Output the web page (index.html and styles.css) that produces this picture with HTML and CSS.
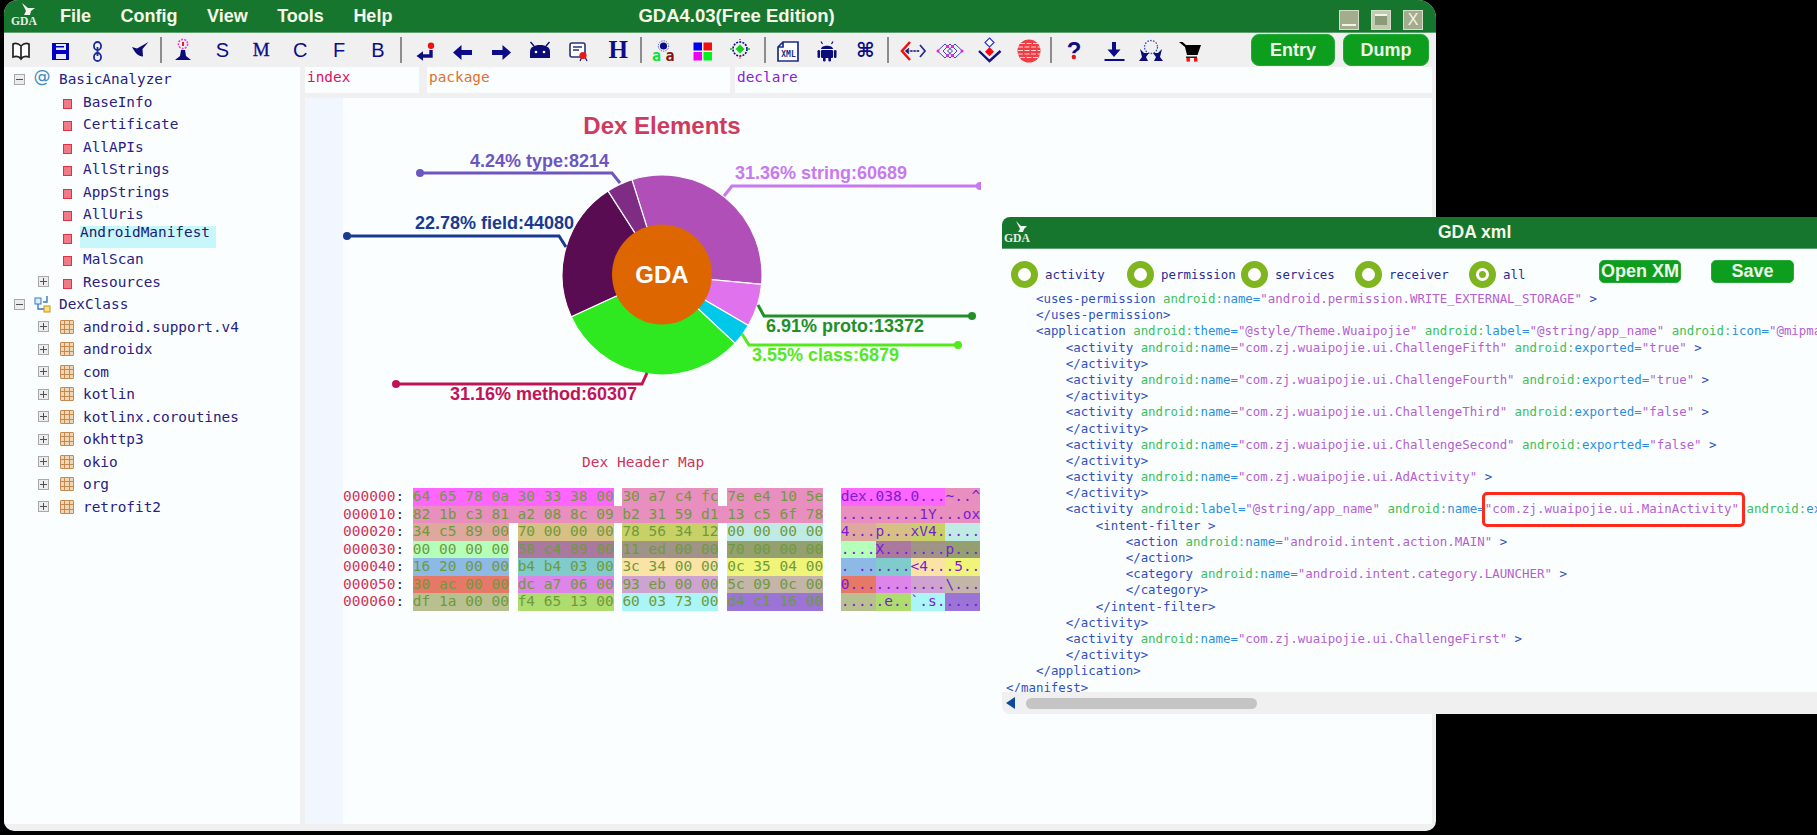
FILE: index.html
```html
<!DOCTYPE html>
<html lang="en">
<head>
  <meta charset="UTF-8" />
  <title>GDA4.03(Free Edition)</title>
  <link rel="stylesheet" href="styles.css">
</head>
<body>
  <div class="app">
    <div class="titlebar">
      <svg class="logo" width="32" height="32" viewBox="0 0 32 32">
        <path d="M16 3 L22 8 L29 8 L25 11 L24 15 L18 15 L20 11 Z" fill="#f2f6ee"/>
        <text x="18" y="25" text-anchor="middle" class="logo-text">GDA</text>
      </svg>
      <div class="menu">
        <span>File</span>
        <span>Config</span>
        <span>View</span>
        <span>Tools</span>
        <span>Help</span>
      </div>
      <div class="app-title">GDA4.03(Free Edition)</div>
      <div class="winbtns">
        <span class="winbtn win-min"></span>
        <span class="winbtn win-max"></span>
        <span class="winbtn win-close">X</span>
      </div>
    </div>

    <div class="toolbar">
      <svg class="tool" viewBox="0 0 34 34"><path d="M17 13 C14 10 11 10 9 11 V24 C12 23 15 23 17 26 C19 23 22 23 25 24 V11 C23 10 20 10 17 13 Z M17 13 V26" fill="#fff" stroke="#222" stroke-width="1.7"/></svg>
      <svg class="tool" viewBox="0 0 34 34"><path d="M9 10 H26 V27 H9 Z" fill="#0000c0"/><rect x="13" y="11" width="10" height="6" fill="#e8e8ff"/><rect x="13" y="21" width="10" height="5" fill="#e8e8ff"/><rect x="13" y="13" width="8" height="1.5" fill="#0000c0"/></svg>
      <svg class="tool" viewBox="0 0 34 34"><g fill="none" stroke="#1c2c9c" stroke-width="1.8"><rect x="12" y="9" width="7" height="8" rx="3.5"/><rect x="12" y="20" width="7" height="8" rx="3.5"/><path d="M15.5 14 V23"/></g></svg>
      <svg class="tool" viewBox="0 0 34 34"><path d="M11 14 L16 15.5 L27.5 9 L21.5 16 L22 23.5 C17 23.5 13.5 19 11 14 Z" fill="#0c0c78"/></svg>
      <span class="sep"></span>
      <svg class="tool" viewBox="0 0 34 34"><circle cx="17" cy="11" r="4.6" fill="none" stroke="#f03ce0" stroke-width="1.6" stroke-dasharray="2 1.2"/><rect x="16" y="9" width="2" height="4" fill="#e02020"/><path d="M15 17 H19 L20 23 L25 27 H9 L14 23 Z" fill="#0c0c78"/></svg>
      <span class="tool tool-letter">S</span>
      <span class="tool tool-letter tool-serif">M</span>
      <span class="tool tool-letter">C</span>
      <span class="tool tool-letter">F</span>
      <span class="tool tool-letter">B</span>
      <span class="sep"></span>
      <svg class="tool" viewBox="0 0 34 34"><circle cx="24" cy="12.7" r="3.2" fill="#f01010"/><path d="M24 17 V23 H14" fill="none" stroke="#0c0c88" stroke-width="3.4"/><path d="M9.5 23 L16 18.2 V27.8 Z" fill="#0c0c88"/></svg>
      <svg class="tool" viewBox="0 0 34 34"><path d="M7 19.5 L15.5 12 V17 H26 V22 H15.5 V27 Z" fill="#0c0c88"/></svg>
      <svg class="tool" viewBox="0 0 34 34"><path d="M27 19.5 L18.5 12 V17 H8 V22 H18.5 V27 Z" fill="#0c0c88"/></svg>
      <svg class="tool" viewBox="0 0 34 34"><path d="M7 25 V19 C7 14 11 12 17 12 C23 12 27 14 27 19 V25 Z" fill="#0c0c78"/><path d="M11 13 L7.5 9 M23 13 L26.5 9" stroke="#0c0c78" stroke-width="1.4"/><circle cx="13" cy="19" r="1.3" fill="#fff"/><circle cx="21" cy="19" r="1.3" fill="#fff"/></svg>
      <svg class="tool" viewBox="0 0 34 34"><rect x="8" y="10" width="15" height="14" rx="2" fill="#fff" stroke="#28307c" stroke-width="1.6"/><path d="M11 14 H20 M11 17 H17" stroke="#28307c" stroke-width="1.4"/><path d="M18 28 L20 24 L23 24 L25 28" fill="none" stroke="#0c0c88" stroke-width="1.2"/><circle cx="21" cy="22.5" r="3.6" fill="#e81818"/></svg>
      <span class="tool tool-letter tool-h">H</span>
      <span class="sep"></span>
      <svg class="tool" viewBox="0 0 34 34"><circle cx="16.5" cy="13" r="3.6" fill="#0c0c88"/><circle cx="16.5" cy="13" r="5.2" fill="none" stroke="#3c50d8" stroke-width="1" stroke-dasharray="1.2 1.2"/><text x="9.5" y="27.5" text-anchor="middle" class="tool-a tool-a-green">a</text><text x="23" y="27.5" text-anchor="middle" class="tool-a tool-a-red">a</text></svg>
      <svg class="tool" viewBox="0 0 34 34"><rect x="7.5" y="9.5" width="8.5" height="8" fill="#0000f0"/><rect x="17.5" y="9.5" width="8.5" height="8" fill="#f01010"/><rect x="7.5" y="19" width="8.5" height="8.5" fill="#f000f0"/><rect x="17.5" y="19" width="8.5" height="8.5" fill="#00f020"/></svg>
      <svg class="tool" viewBox="0 0 34 34"><circle cx="15" cy="16" r="7" fill="none" stroke="#0c0c88" stroke-width="1.6" stroke-dasharray="2 1.2"/><path d="M15 11.5 L19.5 16 L15 20.5 L10.5 16 Z" fill="#10d020"/><path d="M15 6 V8.5 M15 23.5 V26" stroke="#f01010" stroke-width="1.4" stroke-dasharray="1 1"/><path d="M5 16 H7.5 M22.5 16 H25" stroke="#10c020" stroke-width="1.4"/></svg>
      <span class="sep"></span>
      <svg class="tool" viewBox="0 0 34 34"><path d="M13 9 H28 V28 H8 V14 Z M13 9 V14 H8" fill="#fff" stroke="#1c2c8c" stroke-width="1.7"/><text x="18.5" y="23.5" text-anchor="middle" class="tool-xml">XML</text></svg>
      <svg class="tool" viewBox="0 0 34 34"><path d="M12 16 C12 11.5 24 11.5 24 16 Z" fill="#0c0c78"/><path d="M13.5 11 L12 8.5 M22.5 11 L24 8.5" stroke="#0c0c78" stroke-width="1.2"/><rect x="12" y="17" width="12" height="8" rx="1" fill="#0c0c78"/><rect x="8.5" y="17" width="2.6" height="8" rx="1.3" fill="#0c0c78"/><rect x="24.9" y="17" width="2.6" height="8" rx="1.3" fill="#0c0c78"/><rect x="14" y="24" width="2.6" height="4.5" rx="1.2" fill="#0c0c78"/><rect x="19.4" y="24" width="2.6" height="4.5" rx="1.2" fill="#0c0c78"/></svg>
      <span class="tool tool-cmd">⌘</span>
      <span class="sep"></span>
      <svg class="tool" viewBox="0 0 34 34"><path d="M16 9 L8 18 L16 27" fill="none" stroke="#f01010" stroke-width="2.6"/><path d="M13 18 H26" stroke="#0c0c78" stroke-width="1.6" stroke-dasharray="2.4 .8"/><path d="M15 15.5 L12 18 L15 20.5" fill="none" stroke="#0c0c78" stroke-width="1.4"/><path d="M26 12 L31 18 L26 24" fill="none" stroke="#28308c" stroke-width="1.8"/></svg>
      <svg class="tool" viewBox="0 0 34 34"><g fill="none" stroke="#3c48c8" stroke-width="1"><path d="M4.5 18 L12 11 L19.5 18 L12 25 Z"/><path d="M10 18 L17 11 L24 18 L17 25 Z"/><path d="M14.5 18 L22 11 L29.5 18 L22 25 Z"/></g><g fill="#f01ce0"><circle cx="5" cy="18" r="1.5"/><circle cx="14.5" cy="13.5" r="1.5"/><circle cx="19.5" cy="13.5" r="1.5"/><circle cx="14.5" cy="22.5" r="1.5"/><circle cx="19.5" cy="22.5" r="1.5"/><circle cx="29" cy="18" r="1.5"/></g></svg>
      <svg class="tool" viewBox="0 0 34 34"><path d="M17.5 5 L22 9.5 L17.5 14 L13 9.5 Z" fill="#fff" stroke="#2838d8" stroke-width="1.2"/><path d="M17.5 14 L22 18.7 L17.5 23.2 L13 18.7 Z" fill="#f00c10"/><path d="M7 18 L17.5 28 L28.5 18" fill="none" stroke="#101088" stroke-width="2.4"/></svg>
      <svg class="tool" viewBox="0 0 34 34"><circle cx="18" cy="18" r="11.5" fill="#f03c44"/><g stroke="#ffd8d8" stroke-width="1.1" stroke-dasharray="5 1.5" fill="none"><path d="M9 10.5 H27"/><path d="M7 14 H29"/><path d="M7 17.5 H29"/><path d="M7 21 H29"/><path d="M9 24.5 H27"/></g></svg>
      <span class="sep"></span>
      <svg class="tool" viewBox="0 0 34 34"><text x="17" y="25.5" text-anchor="middle" class="tool-q">?</text><rect x="12.8" y="20.2" width="8" height="6" fill="#f0f0f0"/><circle cx="16.8" cy="24" r="2.2" fill="#f01010"/></svg>
      <svg class="tool" viewBox="0 0 34 34"><path d="M19 24 L12.5 16.5 H17 V9 H21 V16.5 H25.5 Z" fill="#0c0c88"/><rect x="9.5" y="26" width="20" height="2" fill="#0c0c88"/></svg>
      <svg class="tool" viewBox="0 0 34 34"><circle cx="17" cy="14" r="6.5" fill="none" stroke="#4050b8" stroke-width="1.3" stroke-dasharray="1.6 1.3"/><path d="M6 16 L10 20 L15 20 L12 24 L14 28 L5 28 L8 24 Z M28 16 L24 20 L19 20 L22 24 L20 28 L29 28 L26 24 Z" fill="#0c0c78"/></svg>
      <svg class="tool" viewBox="0 0 34 34"><path d="M6 9 H9.5 L13 12 H28 L24.5 22 H14 L12 14 Z" fill="#000"/><rect x="13" y="23.5" width="11" height="1.5" fill="#222"/><rect x="13.5" y="25" width="3.4" height="3.6" fill="#f01010"/><rect x="21" y="25" width="3.4" height="3.6" fill="#f01010"/></svg>
      <div class="toolbtns">
        <button class="gbtn btn-entry">Entry</button>
        <button class="gbtn btn-dump">Dump</button>
      </div>
    </div>

    <div class="main">
      <div class="tree">
        <div class="row"><span class="exp minus"></span><span class="ico-root at">@</span><span>BasicAnalyzer</span></div>
        <div class="row sub"><span class="exp none"></span><span class="ico"><i class="leaf"></i></span><span>BaseInfo</span></div>
        <div class="row sub"><span class="exp none"></span><span class="ico"><i class="leaf"></i></span><span>Certificate</span></div>
        <div class="row sub"><span class="exp none"></span><span class="ico"><i class="leaf"></i></span><span>AllAPIs</span></div>
        <div class="row sub"><span class="exp none"></span><span class="ico"><i class="leaf"></i></span><span>AllStrings</span></div>
        <div class="row sub"><span class="exp none"></span><span class="ico"><i class="leaf"></i></span><span>AppStrings</span></div>
        <div class="row sub"><span class="exp none"></span><span class="ico"><i class="leaf"></i></span><span>AllUris</span></div>
        <div class="row sub"><span class="exp none"></span><span class="ico"><i class="leaf"></i></span><span class="selected">AndroidManifest</span></div>
        <div class="row sub"><span class="exp none"></span><span class="ico"><i class="leaf"></i></span><span>MalScan</span></div>
        <div class="row sub"><span class="exp plus"></span><span class="ico"><i class="leaf"></i></span><span>Resources</span></div>
        <div class="row"><span class="exp minus"></span>
          <svg class="ico-root" width="18" height="18" viewBox="0 0 18 18"><rect x="2" y="3" width="6" height="6" fill="#d8ecff" stroke="#3a78c0"/><path d="M5 9 V14 H11 M14 1 V7 H10" fill="none" stroke="#3a78c0" stroke-width="1.4"/><rect x="11" y="11" width="6" height="6" fill="#ffe080" stroke="#c89020"/></svg>
          <span>DexClass</span></div>
        <div class="row sub"><span class="exp plus"></span><span class="ico"><i class="pkg"></i></span><span>android.support.v4</span></div>
        <div class="row sub"><span class="exp plus"></span><span class="ico"><i class="pkg"></i></span><span>androidx</span></div>
        <div class="row sub"><span class="exp plus"></span><span class="ico"><i class="pkg"></i></span><span>com</span></div>
        <div class="row sub"><span class="exp plus"></span><span class="ico"><i class="pkg"></i></span><span>kotlin</span></div>
        <div class="row sub"><span class="exp plus"></span><span class="ico"><i class="pkg"></i></span><span>kotlinx.coroutines</span></div>
        <div class="row sub"><span class="exp plus"></span><span class="ico"><i class="pkg"></i></span><span>okhttp3</span></div>
        <div class="row sub"><span class="exp plus"></span><span class="ico"><i class="pkg"></i></span><span>okio</span></div>
        <div class="row sub"><span class="exp plus"></span><span class="ico"><i class="pkg"></i></span><span>org</span></div>
        <div class="row sub"><span class="exp plus"></span><span class="ico"><i class="pkg"></i></span><span>retrofit2</span></div>
      </div>

      <div class="right">
        <div class="heads">
          <div class="head head-index">index</div>
          <div class="head head-package">package</div>
          <div class="head head-declare">declare</div>
        </div>
        <div class="body">
          <div class="gutter"></div>
          <div class="content">
            <svg class="chart" width="638" height="320" viewBox="343 98 638 320">
              <text x="662" y="134" text-anchor="middle" class="chart-title">Dex Elements</text>
              <g stroke="#fafeff" stroke-width="1.2">
                <path d="M662 275 L631.9 179.6 A100 100 0 0 1 761.6 284.4 Z" fill="#b04fb8"/>
                <path d="M662 275 L761.6 284.4 A100 100 0 0 1 748.3 325.5 Z" fill="#e072ee"/>
                <path d="M662 275 L748.3 325.5 A100 100 0 0 1 735 343.4 Z" fill="#00c8e8"/>
                <path d="M662 275 L735 343.4 A100 100 0 0 1 571.2 316.8 Z" fill="#2ee820"/>
                <path d="M662 275 L571.2 316.8 A100 100 0 0 1 608 190.9 Z" fill="#5a0c52"/>
                <path d="M662 275 L608 190.9 A100 100 0 0 1 631.9 179.6 Z" fill="#7e2c84"/>
              </g>
              <circle cx="662" cy="274.5" r="50" fill="#dd6600"/>
              <text x="662" y="283" text-anchor="middle" class="chart-center">GDA</text>

              <g fill="none" stroke-width="3">
                <polyline points="420,173 612,173 620,183" stroke="#6e55c0"/>
                <polyline points="980,186 732,186 724,196" stroke="#c878f0"/>
                <polyline points="347,236 559,236 566,247" stroke="#1a3a90"/>
                <polyline points="972,316 764,316 758,305" stroke="#248f28"/>
                <polyline points="958,345 749,345 742,334" stroke="#55e81e"/>
                <polyline points="396,384 642,384 647,373" stroke="#c01458"/>
              </g>
              <circle cx="420" cy="173" r="4" fill="#6e55c0"/>
              <circle cx="980" cy="186" r="4" fill="#c878f0"/>
              <circle cx="347" cy="236" r="4" fill="#1a3a90"/>
              <circle cx="972" cy="316" r="4" fill="#248f28"/>
              <circle cx="958" cy="345" r="4" fill="#55e81e"/>
              <circle cx="396" cy="384" r="4" fill="#c01458"/>

              <text x="470" y="167" class="chart-label" fill="#6e55c0">4.24% type:8214</text>
              <text x="735" y="179" class="chart-label" fill="#c878f0">31.36% string:60689</text>
              <text x="415" y="229" class="chart-label" fill="#1a3a90">22.78% field:44080</text>
              <text x="766" y="332" class="chart-label" fill="#248f28">6.91% proto:13372</text>
              <text x="752" y="361" class="chart-label" fill="#55e81e">3.55% class:6879</text>
              <text x="450" y="400" class="chart-label" fill="#c01458">31.16% method:60307</text>
            </svg>

            <div class="map-title">Dex Header Map</div>
            <div class="hex">
              <div class="hexrow"><span class="off">000000</span>: <span class="hx c0a">64 65 78 0a 30 33 38 00</span> <span class="hx c0b">30 a7 c4 fc</span> <span class="hx c0b">7e e4 10 5e</span>  <span class="asc c0a">dex.038.0...</span><span class="asc c0b">~..^</span></div>
              <div class="hexrow"><span class="off">000010</span>: <span class="hx c0b">82 1b c3 81 a2 08 8c 09 b2 31 59 d1 13 c5 6f 78</span>  <span class="asc c0b">.........1Y...ox</span></div>
              <div class="hexrow"><span class="off">000020</span>: <span class="hx c2a">34 c5 89 00</span> <span class="hx c2b">70 00 00 00</span> <span class="hx c2c">78 56 34 12</span> <span class="hx c2d">00 00 00 00</span>  <span class="asc c2a">4...</span><span class="asc c2b">p...</span><span class="asc c2c">xV4.</span><span class="asc c2d">....</span></div>
              <div class="hexrow"><span class="off">000030</span>: <span class="hx c3a">00 00 00 00</span> <span class="hx c3b">58 c4 89 00</span> <span class="hx c3c">11 ed 00 00</span> <span class="hx c3d">70 00 00 00</span>  <span class="asc c3a">....</span><span class="asc c3b">X...</span><span class="asc c3c">....</span><span class="asc c3d">p...</span></div>
              <div class="hexrow"><span class="off">000040</span>: <span class="hx c4a">16 20 00 00</span> <span class="hx c4b">b4 b4 03 00</span> <span class="hx c4c">3c 34 00 00</span> <span class="hx c4d">0c 35 04 00</span>  <span class="asc c4a">. ..</span><span class="asc c4b">....</span><span class="asc c4c">&lt;4..</span><span class="asc c4d">.5..</span></div>
              <div class="hexrow"><span class="off">000050</span>: <span class="hx c5a">30 ac 00 00</span> <span class="hx c5b">dc a7 06 00</span> <span class="hx c5c">93 eb 00 00</span> <span class="hx c5d">5c 09 0c 00</span>  <span class="asc c5a">0...</span><span class="asc c5b">....</span><span class="asc c5c">....</span><span class="asc c5d">\...</span></div>
              <div class="hexrow"><span class="off">000060</span>: <span class="hx c6a">df 1a 00 00</span> <span class="hx c6b">f4 65 13 00</span> <span class="hx c6c">60 03 73 00</span> <span class="hx c6d">d4 c1 16 00</span>  <span class="asc c6a">....</span><span class="asc c6b">.e..</span><span class="asc c6c">`.s.</span><span class="asc c6d">....</span></div>
            </div>
          </div>
        </div>
      </div>
    </div>
  </div>

  <div class="xmlwin">
    <div class="xml-title">
      <svg class="xml-logo" width="32" height="30" viewBox="0 0 32 30">
        <path d="M14 3 L19 8 L25 8 L22 11 L21 14 L16 14 L18 11 Z" fill="#f2f6ee"/>
        <text x="15" y="24" text-anchor="middle" class="logo-text">GDA</text>
      </svg>
      <span class="xml-name">GDA xml</span>
    </div>
    <div class="xml-tools">
      <div class="radios">
        <label class="radio"><i class="ring"></i>activity</label>
        <label class="radio"><i class="ring"></i>permission</label>
        <label class="radio"><i class="ring"></i>services</label>
        <label class="radio"><i class="ring"></i>receiver</label>
        <label class="radio"><i class="ring on"></i>all</label>
      </div>
      <button class="gbtn xbtn btn-open">Open XM</button>
      <button class="gbtn xbtn btn-save">Save</button>
    </div>
    <div class="xml-code">
      <div>    <b class="t">&lt;uses-permission</b> <b class="a">android:</b><b class="n">name=</b><b class="v">"android.permission.WRITE_EXTERNAL_STORAGE"</b> <b class="t">&gt;</b></div>
      <div>    <b class="t">&lt;/uses-permission&gt;</b></div>
      <div>    <b class="t">&lt;application</b> <b class="a">android:</b><b class="n">theme=</b><b class="v">"@style/Theme.Wuaipojie"</b> <b class="a">android:</b><b class="n">label=</b><b class="v">"@string/app_name"</b> <b class="a">android:</b><b class="n">icon=</b><b class="v">"@mipmap/ic_launcher"</b></div>
      <div>        <b class="t">&lt;activity</b> <b class="a">android:</b><b class="n">name=</b><b class="v">"com.zj.wuaipojie.ui.ChallengeFifth"</b> <b class="a">android:</b><b class="n">exported=</b><b class="v">"true"</b> <b class="t">&gt;</b></div>
      <div>        <b class="t">&lt;/activity&gt;</b></div>
      <div>        <b class="t">&lt;activity</b> <b class="a">android:</b><b class="n">name=</b><b class="v">"com.zj.wuaipojie.ui.ChallengeFourth"</b> <b class="a">android:</b><b class="n">exported=</b><b class="v">"true"</b> <b class="t">&gt;</b></div>
      <div>        <b class="t">&lt;/activity&gt;</b></div>
      <div>        <b class="t">&lt;activity</b> <b class="a">android:</b><b class="n">name=</b><b class="v">"com.zj.wuaipojie.ui.ChallengeThird"</b> <b class="a">android:</b><b class="n">exported=</b><b class="v">"false"</b> <b class="t">&gt;</b></div>
      <div>        <b class="t">&lt;/activity&gt;</b></div>
      <div>        <b class="t">&lt;activity</b> <b class="a">android:</b><b class="n">name=</b><b class="v">"com.zj.wuaipojie.ui.ChallengeSecond"</b> <b class="a">android:</b><b class="n">exported=</b><b class="v">"false"</b> <b class="t">&gt;</b></div>
      <div>        <b class="t">&lt;/activity&gt;</b></div>
      <div>        <b class="t">&lt;activity</b> <b class="a">android:</b><b class="n">name=</b><b class="v">"com.zj.wuaipojie.ui.AdActivity"</b> <b class="t">&gt;</b></div>
      <div>        <b class="t">&lt;/activity&gt;</b></div>
      <div>        <b class="t">&lt;activity</b> <b class="a">android:</b><b class="n">label=</b><b class="v">"@string/app_name"</b> <b class="a">android:</b><b class="n">name=</b><b class="v">"com.zj.wuaipojie.ui.MainActivity"</b> <b class="a">android:</b><b class="n">exported=</b><b class="v">"true"</b></div>
      <div>            <b class="t">&lt;intent-filter</b> <b class="t">&gt;</b></div>
      <div>                <b class="t">&lt;action</b> <b class="a">android:</b><b class="n">name=</b><b class="v">"android.intent.action.MAIN"</b> <b class="t">&gt;</b></div>
      <div>                <b class="t">&lt;/action&gt;</b></div>
      <div>                <b class="t">&lt;category</b> <b class="a">android:</b><b class="n">name=</b><b class="v">"android.intent.category.LAUNCHER"</b> <b class="t">&gt;</b></div>
      <div>                <b class="t">&lt;/category&gt;</b></div>
      <div>            <b class="t">&lt;/intent-filter&gt;</b></div>
      <div>        <b class="t">&lt;/activity&gt;</b></div>
      <div>        <b class="t">&lt;activity</b> <b class="a">android:</b><b class="n">name=</b><b class="v">"com.zj.wuaipojie.ui.ChallengeFirst"</b> <b class="t">&gt;</b></div>
      <div>        <b class="t">&lt;/activity&gt;</b></div>
      <div>    <b class="t">&lt;/application&gt;</b></div>
      <div><b class="t">&lt;/manifest&gt;</b></div>
    </div>
    <div class="xml-scroll">
      <i class="scroll-arrow"></i>
      <i class="scroll-thumb"></i>
    </div>
    <div class="redbox"></div>
  </div>
</body>
</html>
```

FILE: styles.css
```css
* {
  box-sizing: border-box;
}
html, body {
  height: 100%;
}
body {
  margin: 0;
  padding-left: 4px;
  background-color: #000;
  overflow: hidden;
  font-family: "Liberation Sans", Arial, sans-serif;
}
.app {
  width: 1432px;
  height: 831px;
  background-color: #f0f0f0;
  border-radius: 14px 18px 10px 10px;
  overflow: hidden;
  display: flex;
  flex-direction: column;
}

/* title bar */
.titlebar {
  height: 33px;
  background-color: #17762e;
  border-bottom: 1px solid #5fa070;
  display: flex;
  align-items: center;
  color: #f6f8e8;
  flex-shrink: 0;
}
.logo {
  margin-left: 2px;
  flex-shrink: 0;
}
.logo-text {
  font-family: "Liberation Serif", serif;
  font-weight: bold;
  font-size: 11.7px;
  fill: #e4efe4;
}
.menu {
  display: flex;
  gap: 29.5px;
  margin-left: 22px;
  font-size: 18px;
  font-weight: bold;
  white-space: nowrap;
}
.app-title {
  margin-left: 246px;
  font-size: 18.5px;
  font-weight: bold;
  white-space: nowrap;
}
.winbtns {
  margin-left: auto;
  margin-right: 13px;
  margin-top: 8px;
  display: flex;
  gap: 12px;
}
.winbtn {
  width: 20px;
  height: 20px;
  background-color: #a3ad8d;
  border: 1px solid #d5dcc8;
  display: flex;
  align-items: center;
  justify-content: center;
  color: #f2f4ea;
  font-size: 16px;
}
.win-min {
  background: linear-gradient(#f2f4ea, #f2f4ea) center bottom 3px / 14px 2px no-repeat, #a3ad8d;
}
.win-max {
  background: linear-gradient(#f2f4ea, #f2f4ea) center top 3px / 12px 2px no-repeat, linear-gradient(#8d9a7a, #8d9a7a) center / 12px 10px no-repeat, #c3cab2;
}

/* toolbar */
.toolbar {
  height: 34px;
  display: flex;
  align-items: center;
  gap: 4.9px;
  flex-shrink: 0;
}
.tool {
  width: 34px;
  height: 34px;
  flex-shrink: 0;
  overflow: visible;
}
.tool-letter {
  display: flex;
  align-items: center;
  justify-content: center;
  color: #0c0c8c;
  font-size: 20px;
}
.tool-serif {
  font-family: "Liberation Serif", serif;
  font-size: 19px;
  -webkit-text-stroke: 0.3px #0c0c8c;
}
.tool-h {
  font-family: "Liberation Serif", serif;
  font-weight: bold;
  font-size: 25px;
}
.tool-cmd {
  display: flex;
  align-items: center;
  justify-content: center;
  color: #0c0c88;
  font-family: "DejaVu Sans", sans-serif;
  font-weight: bold;
  font-size: 20px;
}
.tool-a {
  font-family: "DejaVu Sans Mono", monospace;
  font-weight: bold;
  font-size: 15px;
}
.tool-a-green {
  fill: #10e030;
}
.tool-a-red {
  fill: #8c1010;
}
.tool-xml {
  font-family: "DejaVu Sans Mono", monospace;
  font-size: 8px;
  font-weight: bold;
  fill: #1c2c8c;
}
.tool-q {
  font-family: "Liberation Sans", sans-serif;
  font-weight: bold;
  font-size: 24px;
  fill: #0c0c88;
}
.sep {
  width: 2px;
  height: 26px;
  background-color: #8c8c8c;
  flex-shrink: 0;
}
.toolbtns {
  margin-left: auto;
  margin-right: 7px;
  display: flex;
  gap: 8px;
}
.gbtn {
  height: 32px;
  border: 1px solid #28a83a;
  border-radius: 8px;
  background-color: #0c9e1c;
  color: #eef6ea;
  font-family: "Liberation Sans", sans-serif;
  font-weight: bold;
  font-size: 18px;
  padding: 0;
}
.btn-entry {
  width: 84px;
}
.btn-dump {
  width: 86px;
}

/* main area */
.main {
  height: 757px;
  display: flex;
  gap: 5px;
  flex-shrink: 0;
}
.tree {
  width: 296px;
  background-color: #fafeff;
  padding-top: 1px;
  font-family: "DejaVu Sans Mono", monospace;
  font-size: 14.4px;
  color: #2a2080;
}
.row {
  height: 22.5px;
  display: flex;
  align-items: center;
  padding-left: 10px;
  white-space: nowrap;
}
.row.sub {
  padding-left: 34px;
}
.exp {
  width: 11px;
  height: 11px;
  flex-shrink: 0;
  margin-right: 8px;
  border: 1px solid #a8a8a8;
  background-color: #ececec;
}
.sub .exp {
  margin-right: 10px;
}
.exp.none {
  visibility: hidden;
}
.exp.minus {
  background: linear-gradient(#505050, #505050) center / 7px 1px no-repeat, #ececec;
}
.exp.plus {
  background: linear-gradient(#505050, #505050) center / 7px 1px no-repeat, linear-gradient(#505050, #505050) center / 1px 7px no-repeat, #ececec;
}
.ico-root {
  width: 18px;
  margin-right: 8px;
  flex-shrink: 0;
}
.at {
  color: #3c88c0;
  font-family: "DejaVu Sans", sans-serif;
  font-size: 17px;
  line-height: 18px;
  margin-top: -6px;
  text-align: center;
}
.ico {
  width: 16px;
  height: 16px;
  margin-right: 8px;
  flex-shrink: 0;
  display: flex;
  align-items: center;
  justify-content: center;
}
.leaf {
  width: 9px;
  height: 10px;
  margin-top: 4px;
  background-color: #f27a86;
  border: 1.5px solid #e23040;
}
.pkg {
  width: 14px;
  height: 14px;
  border: 1px solid #c58a52;
  border-radius: 1px;
  background:
    linear-gradient(#c08a50, #c08a50) 0 3px / 100% 1px no-repeat,
    linear-gradient(#c08a50, #c08a50) 0 8px / 100% 1px no-repeat,
    linear-gradient(#c08a50, #c08a50) 3px 0 / 1px 100% no-repeat,
    linear-gradient(#c08a50, #c08a50) 8px 0 / 1px 100% no-repeat,
    #f0d6b4;
}
.selected {
  width: 136px;
  height: 22px;
  margin-left: -3px;
  line-height: 12px;
  background-color: #c8f7fb;
  color: #1a2070;
}

/* right side */
.right {
  width: 1127px;
  min-height: 0;
  display: flex;
  flex-direction: column;
  gap: 5px;
}
.heads {
  height: 26px;
  flex-shrink: 0;
  display: flex;
  font-family: "DejaVu Sans Mono", monospace;
  font-size: 14.4px;
  line-height: 20px;
}
.head {
  background-color: #fafeff;
  padding-left: 2px;
}
.head-index {
  width: 114px;
  margin-right: 8px;
  color: #e0105a;
}
.head-package {
  width: 303px;
  margin-right: 5px;
  color: #e07030;
}
.head-declare {
  flex: 1;
  color: #8a20d8;
}
.body {
  flex: 1;
  min-height: 0;
  display: flex;
  background-color: #fafeff;
}
.gutter {
  width: 38px;
  background-color: #f2f6fe;
}
.content {
  flex: 1;
}
.chart {
  display: block;
}
.chart-title {
  font-family: "Liberation Sans", sans-serif;
  font-weight: bold;
  font-size: 24px;
  fill: #cf3a5e;
}
.chart-center {
  font-family: "Liberation Sans", sans-serif;
  font-weight: bold;
  font-size: 24px;
  fill: #fff;
}
.chart-label {
  font-family: "Liberation Sans", sans-serif;
  font-weight: bold;
  font-size: 18px;
}
.map-title {
  margin-top: 35px;
  padding-left: 239px;
  font-family: "DejaVu Sans Mono", monospace;
  font-size: 14.5px;
  line-height: 18px;
  color: #d0335a;
}
.hex {
  margin-top: 17px;
  font-family: "DejaVu Sans Mono", monospace;
  font-size: 14.5px;
  line-height: 17.5px;
  color: #333;
}
.hexrow {
  height: 17.5px;
  white-space: pre;
}
.off {
  color: #d0335a;
}
.hx,
.asc {
  display: inline-block;
  height: 17.5px;
}
.hx {
  color: #6f9a3c;
}
.asc {
  color: #7a1bd8;
}
.c0a { background-color: #ff66ff; }
.c0b { background-color: #e98fc0; }
.c2a { background-color: #dfa89e; }
.c2b { background-color: #d6c083; }
.c2c { background-color: #c8d166; }
.c2d { background-color: #c0ebe4; }
.c3a { background-color: #b4ffb9; }
.c3b { background-color: #ab78a0; }
.c3c { background-color: #a09488; }
.c3d { background-color: #94a070; }
.c4a { background-color: #8cb9e6; }
.c4b { background-color: #80cccc; }
.c4c { background-color: #fbe3a6; }
.c4d { background-color: #f0f57a; }
.c5a { background-color: #e67868; }
.c5b { background-color: #dd85e8; }
.c5c { background-color: #cfa3cf; }
.c5d { background-color: #c3b5a8; }
.c6a { background-color: #b8c090; }
.c6b { background-color: #afdc6e; }
.c6c { background-color: #aaf5f5; }
.c6d { background-color: #9c74d8; }

/* xml window, floats over the main one */
.xmlwin {
  position: absolute;
  left: 1002px;
  top: 217px;
  width: 815px;
  height: 497px;
  background-color: #fbfeff;
  border-radius: 8px 0 0 8px;
  overflow: hidden;
  display: flex;
  flex-direction: column;
}
.xml-title {
  height: 32px;
  background-color: #17762e;
  border-bottom: 1px solid #5fa070;
  display: flex;
  align-items: center;
  color: #f6f8e8;
  flex-shrink: 0;
}
.xml-name {
  margin-left: 404px;
  font-size: 17.5px;
  font-weight: bold;
}
.xml-tools {
  height: 41px;
  padding: 9px 0 0 9px;
  display: flex;
  flex-shrink: 0;
}
.radios {
  display: grid;
  grid-template-columns: 116px 114px 114px 114px 130px;
  height: 32px;
  align-items: center;
  font-family: "DejaVu Sans Mono", monospace;
  font-size: 12.43px;
  color: #2a2a90;
}
.radio {
  display: flex;
  align-items: center;
  gap: 7px;
}
.ring {
  width: 27px;
  height: 27px;
  border-radius: 50%;
  border: 7px solid #7fb51e;
  background-color: #fff;
  flex-shrink: 0;
}
.ring.on {
  background: radial-gradient(circle, #7fb51e 0 3px, #fff 4px);
}
.xbtn {
  height: 23px;
  margin-top: 2px;
  overflow: hidden;
  white-space: nowrap;
  border-radius: 5px;
}
.btn-open {
  width: 82px;
  margin-right: 30px;
}
.btn-save {
  width: 83px;
}
.xml-code {
  flex: 1;
  min-height: 0;
  overflow: hidden;
  padding: 1px 0 0 4px;
  font-family: "DejaVu Sans Mono", monospace;
  font-size: 12.43px;
  line-height: 16.2px;
}
.xml-code div {
  height: 16.2px;
  white-space: pre;
}
.xml-code b {
  font-weight: normal;
}
.t { color: #3050c0; }
.a { color: #3cc05a; }
.n { color: #2a8ee0; }
.v { color: #b45fd0; }
.xml-scroll {
  height: 22px;
  background-color: #f0f0f0;
  display: flex;
  align-items: center;
  padding-left: 4px;
  flex-shrink: 0;
}
.scroll-arrow {
  width: 0;
  height: 0;
  border-top: 6px solid transparent;
  border-bottom: 6px solid transparent;
  border-right: 9px solid #0c4aa0;
}
.scroll-thumb {
  width: 231px;
  height: 11px;
  margin-left: 11px;
  background-color: #c4c4c4;
  border-radius: 6px;
}
.redbox {
  position: absolute;
  left: 480px;
  top: 275px;
  width: 263px;
  height: 35px;
  border: 3px solid #ff2a1a;
  border-radius: 5px;
}
```
